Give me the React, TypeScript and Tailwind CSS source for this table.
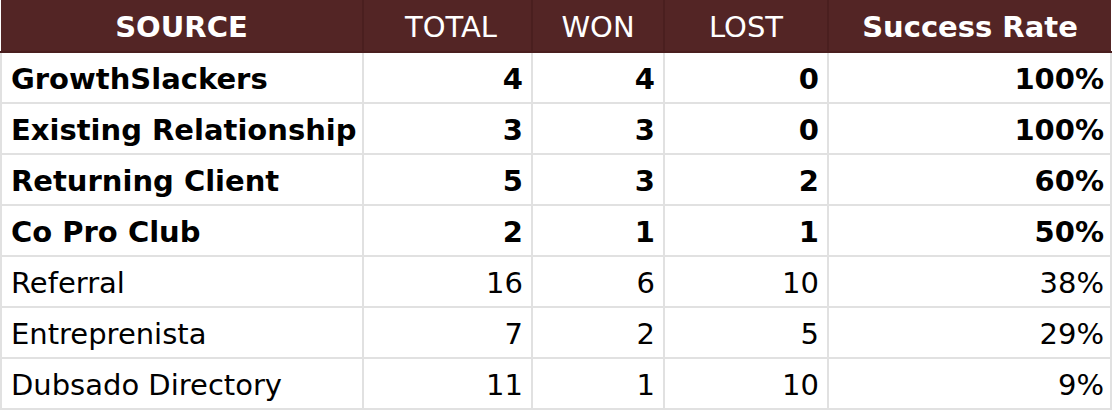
const rows = [
  { source: 'GrowthSlackers', total: 4, won: 4, lost: 0, rate: '100%', bold: true },
  { source: 'Existing Relationship', total: 3, won: 3, lost: 0, rate: '100%', bold: true },
  { source: 'Returning Client', total: 5, won: 3, lost: 2, rate: '60%', bold: true },
  { source: 'Co Pro Club', total: 2, won: 1, lost: 1, rate: '50%', bold: true },
  { source: 'Referral', total: 16, won: 6, lost: 10, rate: '38%', bold: false },
  { source: 'Entreprenista', total: 7, won: 2, lost: 5, rate: '29%', bold: false },
  { source: 'Dubsado Directory', total: 11, won: 1, lost: 10, rate: '9%', bold: false },
];

export default function App() {
  return (
    <div className="w-[1112px] h-[412px] bg-white font-['DejaVu_Sans',sans-serif] text-black">
      <table className="border-collapse table-fixed w-[1110px]">
        <colgroup>
          <col className="w-[362px]" />
          <col className="w-[169px]" />
          <col className="w-[132px]" />
          <col className="w-[164px]" />
          <col className="w-[283px]" />
        </colgroup>
        <thead>
          <tr className="h-[52px] bg-[#532525] text-white text-[29px] leading-none">
            <th className="border-2 border-[#4a1f1f] border-t-0 border-l-0 font-bold pt-1">SOURCE</th>
            <th className="border-2 border-[#4a1f1f] border-t-0 font-normal text-right pr-[34px] pt-1">TOTAL</th>
            <th className="border-2 border-[#4a1f1f] border-t-0 font-normal pt-1">WON</th>
            <th className="border-2 border-[#4a1f1f] border-t-0 font-normal text-left pl-[44px] pt-1">LOST</th>
            <th className="border-2 border-[#4a1f1f] border-t-0 border-r-0 font-bold pt-1">Success Rate</th>
          </tr>
        </thead>
        <tbody>
          {rows.map((r) => (
            <tr
              key={r.source}
              className={`h-[51px] text-[29px] leading-none ${r.bold ? 'font-bold' : 'font-normal'}`}
            >
              <td className="border-2 border-[#e1e1e1] pl-[9px] pt-1">{r.source}</td>
              <td className="border-2 border-[#e1e1e1] text-right pr-[8px] pt-1">{r.total}</td>
              <td className="border-2 border-[#e1e1e1] text-right pr-[8px] pt-1">{r.won}</td>
              <td className="border-2 border-[#e1e1e1] text-right pr-[8px] pt-1">{r.lost}</td>
              <td className="border-2 border-[#e1e1e1] text-right pr-[6px] pt-1">{r.rate}</td>
            </tr>
          ))}
        </tbody>
      </table>
    </div>
  );
}
